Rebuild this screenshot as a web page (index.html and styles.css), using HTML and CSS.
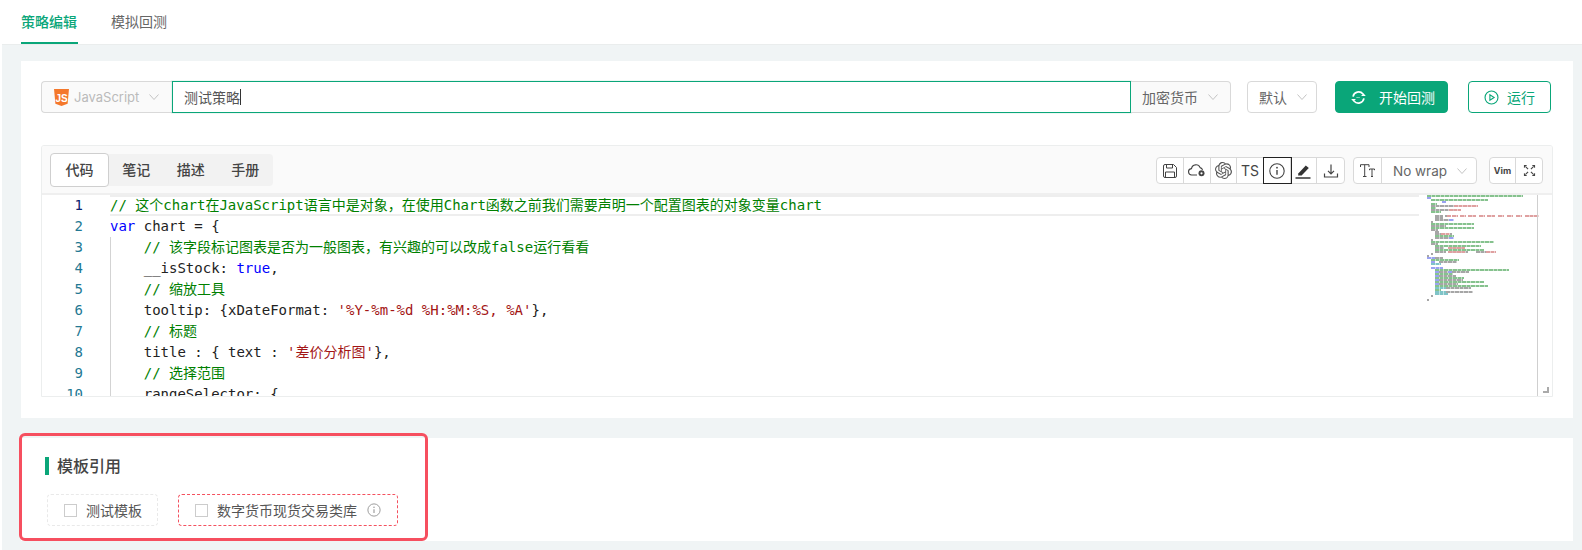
FILE: index.html
```html
<!DOCTYPE html>
<html lang="zh">
<head>
<meta charset="utf-8">
<title>策略编辑</title>
<link rel="stylesheet" href="styles.css">
</head>
<body>
<div class="app">
  <nav class="tabs">
    <a class="tab active">策略编辑</a>
    <a class="tab">模拟回测</a>
  </nav>
  <main class="main">
    <section class="card card-editor">
      <div class="toprow">
        <div class="select lang">
          <svg class="js" viewBox="0 0 15 17"><path fill="#f4782b" d="M0 0h15l-1.400 14.800L7.500 17l-6.100-2.200z"/><text x="7.500" y="12.500" text-anchor="middle" class="js-text">JS</text></svg>
          <span class="muted">JavaScript</span>
          <svg class="chev" viewBox="0 0 10 6"><path d="M.5.5 5 5.500 9.500.5"/></svg>
        </div>
        <div class="name-input"><span>测试策略</span><i class="caret"></i></div>
        <div class="select crypto">
          <span>加密货币</span>
          <svg class="chev" viewBox="0 0 10 6"><path d="M.5.5 5 5.500 9.500.5"/></svg>
        </div>
        <div class="select def">
          <span>默认</span>
          <svg class="chev" viewBox="0 0 10 6"><path d="M.5.5 5 5.500 9.500.5"/></svg>
        </div>
        <button class="btn primary">
          <svg class="btn-ico" viewBox="0 0 16 16" fill="none" stroke="#fff" stroke-width="1.800"><path d="M2.200 7A6 6 0 0 1 12.800 4.300M13.800 9A6 6 0 0 1 3.200 11.700"/><path fill="#fff" stroke="none" d="M15.800 6.500h-5l2.500-3zM.2 9.500h5l-2.500 3z"/><path stroke-width="1" stroke-dasharray="1 1" d="M6 8h4"/></svg>
          <span>开始回测</span>
        </button>
        <button class="btn outline">
          <svg class="btn-ico" viewBox="0 0 16 16" fill="none" stroke="#0aa679" stroke-width="1.200"><circle cx="8" cy="8" r="6.900"/><path d="M6.300 5v6l4.500-3z"/></svg>
          <span>运行</span>
        </button>
      </div>

      <div class="editor">
        <header class="ed-head">
          <div class="ed-tabs">
            <a class="ed-tab on">代码</a>
            <a class="ed-tab">笔记</a>
            <a class="ed-tab">描述</a>
            <a class="ed-tab">手册</a>
          </div>
          <div class="tools">
            <div class="group g-main">
              <span class="tool"><svg viewBox="0 0 16 16" fill="none" stroke="#444" stroke-width="1"><path d="M1.500 3a1.500 1.500 0 0 1 1.500-1.500h8.500l3 3V13a1.500 1.500 0 0 1-1.500 1.500H3A1.500 1.500 0 0 1 1.500 13z"/><path d="M4.500 1.500v3.500h6V1.500M3.500 14.500V9h9v5.500"/></svg></span>
              <span class="tool"><svg class="cloud" viewBox="0 0 18 13" fill="none" stroke="#444" stroke-width="1.100"><path d="M9 11H4a3.200 3.200 0 0 1-.5-6.400 4.500 4.500 0 0 1 8.600-1 3 3 0 0 1 2.400 2.400"/><circle cx="13.500" cy="9.300" r="3" fill="#444" stroke="none"/><circle cx="13.500" cy="9.300" r="1.100" fill="#fff" stroke="none"/></svg></span>
              <span class="tool"><svg class="gpt" viewBox="0 0 24 24" fill="#555"><path d="M22.282 9.821a5.985 5.985 0 0 0-.516-4.910 6.046 6.046 0 0 0-6.510-2.900A6.065 6.065 0 0 0 4.981 4.180a5.985 5.985 0 0 0-3.998 2.900 6.046 6.046 0 0 0 .743 7.097 5.980 5.980 0 0 0 .510 4.911 6.051 6.051 0 0 0 6.515 2.900A5.985 5.985 0 0 0 13.260 24a6.056 6.056 0 0 0 5.772-4.206 5.990 5.990 0 0 0 3.997-2.900 6.056 6.056 0 0 0-.747-7.073zM13.260 22.430a4.476 4.476 0 0 1-2.876-1.040l.141-.081 4.779-2.758a.795.795 0 0 0 .392-.681v-6.737l2.020 1.168a.071.071 0 0 1 .038.052v5.583a4.504 4.504 0 0 1-4.494 4.494zM3.600 18.304a4.470 4.470 0 0 1-.535-3.014l.142.085 4.783 2.759a.771.771 0 0 0 .780 0l5.843-3.369v2.332a.080.080 0 0 1-.033.062L9.740 19.950a4.500 4.500 0 0 1-6.140-1.646zM2.340 7.896a4.485 4.485 0 0 1 2.366-1.973V11.600a.766.766 0 0 0 .388.676l5.815 3.355-2.020 1.168a.076.076 0 0 1-.071 0l-4.830-2.786A4.504 4.504 0 0 1 2.340 7.872zm16.597 3.855l-5.833-3.387L15.119 7.200a.076.076 0 0 1 .071 0l4.830 2.791a4.494 4.494 0 0 1-.676 8.105v-5.678a.790.790 0 0 0-.407-.667zm2.010-3.023l-.141-.085-4.774-2.782a.776.776 0 0 0-.785 0L9.409 9.230V6.897a.066.066 0 0 1 .028-.061l4.830-2.787a4.500 4.500 0 0 1 6.680 4.660zm-12.640 4.135l-2.020-1.164a.080.080 0 0 1-.038-.057V6.075a4.500 4.500 0 0 1 7.375-3.453l-.142.080L8.704 5.460a.795.795 0 0 0-.393.681zm1.097-2.365l2.602-1.500 2.607 1.500v2.999l-2.597 1.500-2.607-1.500z"/></svg></span>
              <span class="tool ts">TS</span>
              <span class="tool focus"><svg viewBox="0 0 16 16" fill="none" stroke="#444" stroke-width="1.100"><circle cx="8" cy="8" r="7.200"/><path d="M8 7v4.800" stroke-width="1.400"/><circle cx="8" cy="4.700" r=".9" fill="#444" stroke="none"/></svg></span>
              <span class="tool"><svg viewBox="0 0 16 16"><path fill="#333" d="M3.500 10.200 10.800 2.500l3 2.600-7.200 7.500H3z"/><path d="M.5 15h15" stroke="#333" stroke-width="1.400"/></svg></span>
              <span class="tool"><svg viewBox="0 0 16 16" fill="none" stroke="#444" stroke-width="1.200"><path d="M8 1.500v9M5 7.800 8 10.800l3-3M1.500 10.500v3.500h13v-3.500"/></svg></span>
            </div>
            <div class="group">
              <span class="tool tt"><svg viewBox="0 0 15 13" fill="none" stroke="#444" stroke-width="1"><path d="M.5 3V.7h8.500V3M4.700.7v11.800M3 12.500h3.500M9.500 6.200V5h5v1.200M12 5v7.500M11 12.500h2"/></svg></span>
              <span class="wrap-select">No wrap<svg class="chev" viewBox="0 0 10 6"><path d="M.5.5 5 5.500 9.500.5"/></svg></span>
            </div>
            <div class="group last">
              <span class="tool vim">Vim</span>
              <span class="tool expand"><svg viewBox="0 0 14 14" fill="#444"><path d="M1 1h3.500L1 4.500zM13 1H9.500L13 4.500zM1 13h3.500L1 9.500zM13 13H9.500L13 9.500z"/><path d="M3 3l2.500 2.500M11 3 8.500 5.500M3 11l2.500-2.500M11 11 8.500 8.500" stroke="#444" stroke-width="1.200"/></svg></span>
            </div>
          </div>
        </header>
        <div class="ed-body">
          <div class="gutter">
            <div class="ln cur">1</div><div class="ln">2</div><div class="ln">3</div><div class="ln">4</div><div class="ln">5</div><div class="ln">6</div><div class="ln">7</div><div class="ln">8</div><div class="ln">9</div><div class="ln">10</div>
          </div>
          <div class="code">
            <div class="cl first"><span class="c">// 这个chart在JavaScript语言中是对象，在使用Chart函数之前我们需要声明一个配置图表的对象变量chart</span></div>
            <div class="cl"><span class="k">var</span> chart = {</div>
            <div class="block">
              <div class="cl">    <span class="c">// 该字段标记图表是否为一般图表，有兴趣的可以改成false运行看看</span></div>
              <div class="cl">    __isStock: <span class="k">true</span>,</div>
              <div class="cl">    <span class="c">// 缩放工具</span></div>
              <div class="cl">    tooltip: {xDateFormat: <span class="s">'%Y-%m-%d %H:%M:%S, %A'</span>},</div>
              <div class="cl">    <span class="c">// 标题</span></div>
              <div class="cl">    title : { text : <span class="s">'差价分析图'</span>},</div>
              <div class="cl">    <span class="c">// 选择范围</span></div>
              <div class="cl">    rangeSelector: {</div>
            </div>
          </div>
          <div class="minimap">
            <svg class="mini-svg" viewBox="0 0 118 110" width="118" height="110">
              <path class="m-g" d="M6 1h96M10 5h57M10 9h6M10 13h5M10 17h10M10 29h43M10 33h43M14 41h19M10 47h63M14 51h46M14 55h49M10 65h28M10 69h4M14 75h74M14 79h18M14 83h29M14 87h49M14 91h53M14 95h6"/>
              <path class="m-k" d="M6 3h4M21 7h4M28 25h5M28 43h5M6 63h8M10 67h4M10 73h12M14 77h4M27 77h4M14 81h4M14 85h4M14 89h4"/>
              <path class="m-t" d="M10 11h25M10 15h23M14 21h8M24 21h5M14 23h8M14 25h14M10 27h2M10 31h15M10 35h7M14 37h4M14 39h6M29 39h2M14 43h14M10 45h2M10 49h7M14 53h9M27 53h17M14 57h11M27 57h20M55 57h14M10 59h2M6 61h2M14 63h8M18 67h18M18 77h9M31 77h17M18 81h17M18 85h24M18 89h19M25 93h25M25 97h27M10 101h2M6 105h2"/>
              <path class="m-s" d="M33 11h24M28 15h12M26 21h4M31 21h6M39 21h6M47 21h8M58 21h6M66 21h8M77 21h6M86 21h6M95 21h6M104 21h14M20 39h9M27 53h17M27 57h17M65 57h10"/>
              <path class="m-c" d="M10 69h10M14 93h11M14 97h11M14 99h13"/>
            </svg>
          </div>
          <div class="scroll"><i class="handle"></i></div>
        </div>
      </div>
    </section>

    <section class="card card-tpl">
      <h3 class="tpl-title">模板引用</h3>
      <div class="tpl-list">
        <label class="tpl"><i class="cb"></i><span>测试模板</span></label>
        <label class="tpl warn"><i class="cb"></i><span>数字货币现货交易类库</span>
          <svg class="tpl-info" viewBox="0 0 16 16" fill="none" stroke="#999" stroke-width="1.100"><circle cx="8" cy="8" r="7"/><path d="M8 7v4.500" stroke-width="1.300"/><circle cx="8" cy="4.800" r=".9" fill="#999" stroke="none"/></svg>
        </label>
      </div>
      <div class="highlight"></div>
    </section>
  </main>
</div>
</body>
</html>
```
FILE: styles.css
```css
* { box-sizing: border-box; }
html, body { margin: 0; height: 100%; }
body {
  background: #fff;
  font-family: Inter, "Noto Sans CJK SC", sans-serif;
  font-size: 14px;
  color: #555;
  overflow: hidden;
}
.app { margin-left: 2px; height: 550px; background: #f0f4f5; }

.tabs {
  display: flex;
  gap: 33px;
  height: 45px;
  padding-left: 19px;
  background: #fff;
  border-bottom: 1px solid #eaeded;
}
.tab { height: 44px; line-height: 44px; width: 56px; color: #666; white-space: nowrap; }
.tab.active { width: 57px; color: #0aa679; font-weight: 500; border-bottom: 2px solid #0aa679; }

.main { padding: 16px 9px 0 19px; }
.card { background: #fff; }
.card-editor { height: 357px; padding: 20px; }
.card-tpl { position: relative; height: 103px; margin-top: 20px; padding: 19px 24px 0; }

.toprow { display: flex; height: 32px; padding-right: 2px; }
.select {
  display: flex;
  align-items: center;
  height: 32px;
  padding: 0 11px;
  background: #fafafa;
  border: 1px solid #d9d9d9;
  border-radius: 4px;
  color: #666;
  white-space: nowrap;
}
.lang { width: 131px; padding-left: 12px; border-right: 0; border-radius: 4px 0 0 4px; }
.js { width: 15px; height: 17px; margin-right: 5px; flex: none; }
.js-text { fill: #fff; font-family: "Liberation Sans", sans-serif; font-size: 10px; font-weight: 700; }
.muted { color: #bbb; font-size: 13px; }
.chev { width: 10px; height: 6px; margin-left: 10px; fill: none; stroke: #c4c4c4; stroke-width: 1; flex: none; }
.name-input {
  flex: 1;
  display: flex;
  align-items: center;
  padding: 0 11px;
  border: 1px solid #0aa679;
  box-shadow: 0 0 0 1px rgba(10, 166, 121, .08);
  color: #555;
}
.caret { width: 1px; height: 16px; background: #333; }
.crypto { width: 100px; border-left: 0; border-radius: 0 4px 4px 0; }
.def { width: 70px; margin-left: 16px; background: #fff; }
.btn {
  display: flex;
  align-items: center;
  height: 32px;
  padding: 0 0 0 15px;
  border-radius: 4px;
  font: inherit;
  white-space: nowrap;
}
.btn-ico { width: 15px; height: 15px; flex: none; }
.primary { gap: 13px; width: 113px; margin-left: 18px; background: #0aa679; border: 1px solid #0aa679; color: #fff; }
.outline { gap: 8px; width: 83px; margin-left: 20px; background: #fff; border: 1px solid #0aa679; color: #0aa679; }

.editor {
  height: 252px;
  margin-top: 32px;
  border: 1px solid #eceeee;
  border-radius: 3px 3px 0 0;
  overflow: hidden;
}
.ed-head {
  display: flex;
  align-items: center;
  justify-content: space-between;
  height: 49px;
  padding: 1px 9px 0 8px;
  background: #fafafa;
  border-bottom: 2px solid #efefef;
}
.ed-tabs { display: flex; align-items: center; height: 32px; background: #f2f2f2; border-radius: 4px; }
.ed-tab { width: 54.500px; height: 32px; line-height: 32px; text-align: center; color: #444; font-weight: 500; }
.ed-tab.on {
  width: 59px;
  height: 34px;
  line-height: 32px;
  background: #fff;
  border: 1px solid #cfcfcf;
  border-radius: 4px;
}
.tools { display: flex; align-items: center; margin-top: 1px; }
.group {
  display: flex;
  height: 27px;
  margin-left: 8px;
  background: #fff;
  border: 1px solid #d9d9d9;
  border-radius: 4px;
}
.group.last { margin-left: 12px; }
.tool {
  display: flex;
  align-items: center;
  justify-content: center;
  width: 26px;
  border-right: 1px solid #d9d9d9;
  color: #444;
}
.g-main .tool { width: 26.700px; }
.tool:last-child { border-right: 0; }
.tool svg { width: 16px; height: 16px; }
.tool svg.cloud { width: 18px; height: 13px; }
.tool svg.gpt { width: 17px; height: 17px; }
.ts { font-size: 14px; }
.focus { outline: 1px solid #222; }
.tt { width: 28px; }
.tool.tt svg { width: 15px; height: 13px; }
.wrap-select {
  display: flex;
  align-items: center;
  width: 94px;
  padding-left: 11px;
  color: #666;
  font-size: 13.500px;
  white-space: nowrap;
}
.vim { font-size: 9px; font-weight: 700; }
.tool.expand svg { width: 13px; height: 13px; }

.ed-body { display: flex; height: 201px; overflow: hidden; background: #fff; }
.gutter { width: 68px; flex: none; padding-right: 27px; text-align: right; }
.ln, .cl {
  height: 21px;
  line-height: 21px;
  font-family: "DejaVu Sans Mono", "Noto Sans CJK SC", monospace;
  font-size: 14px;
  white-space: pre;
}
.ln { color: #237893; }
.ln.cur { color: #0b216f; }
.code { flex: 1; min-width: 0; color: #222; }
.cl.first { box-shadow: inset 0 2px 0 #eeeeee, inset 0 -2px 0 #eeeeee; }
.block { border-left: 1px solid #d3d3d3; }
.block .cl { margin-left: -1px; }
.c { color: #008000; }
.k { color: #0000ff; }
.s { color: #a31515; }
.minimap { width: 118px; flex: none; }
.mini-svg { display: block; margin-left: 2px; fill: none; stroke-width: 1.800; stroke-dasharray: 4 .5; }
.m-g { stroke: #86c28e; }
.m-k { stroke: #9aa2f2; }
.m-t { stroke: #a6a6a6; }
.m-s { stroke: #dfa0a0; }
.m-c { stroke: #7fc4c8; }
.scroll { position: relative; width: 15px; flex: none; border-left: 1px solid #cfcfcf; }
.handle {
  position: absolute;
  right: 3px;
  bottom: 3px;
  width: 6px;
  height: 6px;
  border-right: 2px solid #aaa;
  border-bottom: 2px solid #aaa;
}

.tpl-title {
  display: flex;
  align-items: center;
  margin: 0;
  height: 18px;
  padding: 0 0 2px 8px;
  border-left: 4px solid #0aa679;
  font-size: 16px;
  font-weight: 500;
  color: #444;
}
.tpl-list { display: flex; gap: 20px; margin-top: 19px; margin-left: 2px; }
.tpl {
  display: flex;
  align-items: center;
  height: 32px;
  padding: 0 15px 0 16px;
  border: 1px dashed #e9e9e9;
  border-radius: 4px;
  color: #555;
  white-space: nowrap;
}
.tpl.warn { padding-right: 16px; border-color: #f4515f; }
.cb { width: 13px; height: 13px; margin-right: 9px; border: 1px solid #ccc; background: #fff; flex: none; }
.tpl-info { width: 14px; height: 14px; margin-left: 10px; }
.highlight {
  position: absolute;
  left: -2px;
  top: -5px;
  width: 409px;
  height: 108px;
  border: 3px solid #f64f5f;
  border-radius: 6px;
  pointer-events: none;
}
```
